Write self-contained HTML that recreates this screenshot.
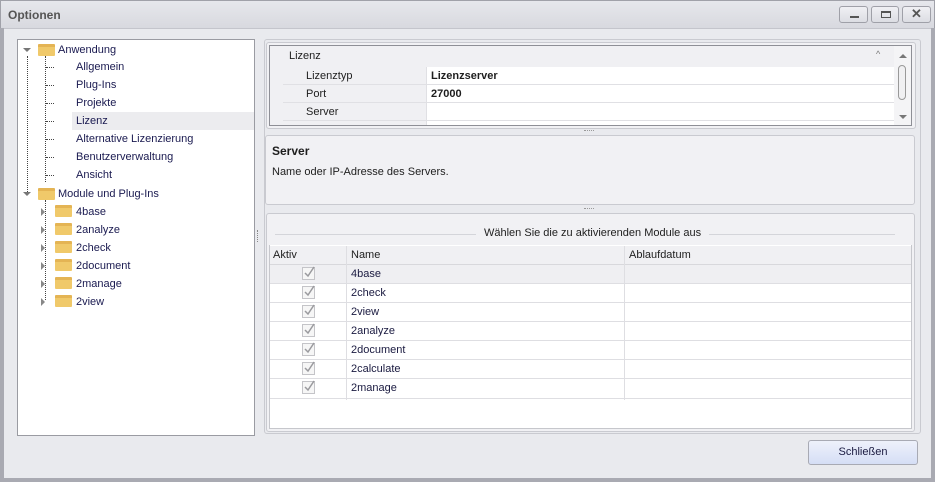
<!DOCTYPE html>
<html><head><meta charset="utf-8"><style>
*{box-sizing:border-box;margin:0;padding:0}
body{width:935px;height:482px;overflow:hidden;font-family:"Liberation Sans",sans-serif;font-size:11px;color:#1e1e1e;background:#a9aab2;position:relative}
.a{position:absolute}
#title{left:0;top:0;width:935px;height:28px;background:linear-gradient(#e6e7ec,#d8d9df);border:1px solid #a0a1a9;border-bottom:none}
#body{left:4px;top:28px;width:927px;height:450px;background:#e9eaee;border-top:1px solid #c4c5cc}
.wb{top:5px;height:17px;border:1px solid #9fa0a8;border-radius:3px;background:linear-gradient(#f0f0f4,#dcdde3)}
.tree{left:17px;top:39px;width:238px;height:397px;background:#fff;border:1px solid #9a9ba2}
.t{position:absolute;height:18px;line-height:18px;color:#1a1a50}
.fold{position:absolute;width:17px;height:12px;background:#f0c96a;border-radius:1px;border-top:3px solid #e4b454}
.dot{position:absolute;border-left:1px dotted #444}
.doth{position:absolute;border-top:1px dotted #444;width:8px}
.arr{position:absolute;width:0;height:0}
.grp{border:1px solid #c9cad0;border-radius:3px;background:#f1f1f4}
.cell{position:absolute;height:18px;line-height:18px;border-bottom:1px solid #e0e0e4}
</style></head><body>
<div id="title" class="a"><div class="a" style="left:7px;top:7px;font-weight:bold;font-size:12px;color:#555">Optionen</div>
<div class="a wb" style="left:838px;width:29px"><div class="a" style="left:10px;top:9px;width:9px;height:2px;background:#555"></div></div>
<div class="a wb" style="left:870px;width:28px"><div class="a" style="left:9px;top:4px;width:10px;height:7px;border:1px solid #555;border-top-width:2px"></div></div>
<div class="a wb" style="left:901px;width:29px;text-align:center;font-size:13px;line-height:14px;color:#555;font-weight:bold">✕</div>
</div>
<div id="body" class="a"></div>

<div class="a tree">
<div class="arr" style="left:5px;top:8px;border-left:4px solid transparent;border-right:4px solid transparent;border-top:4px solid #777"></div>
<div class="fold" style="left:20px;top:4px"></div>
<div class="t" style="left:40px;top:1px">Anwendung</div>
<div class="dot" style="left:9px;top:16px;height:136px"></div>
<div class="dot" style="left:27px;top:16px;height:126px"></div>
<div class="doth" style="left:28px;top:27px"></div><div class="t" style="left:58px;top:18px">Allgemein</div>
<div class="doth" style="left:28px;top:45px"></div><div class="t" style="left:58px;top:36px">Plug-Ins</div>
<div class="doth" style="left:28px;top:63px"></div><div class="t" style="left:58px;top:54px">Projekte</div>
<div class="a" style="left:54px;top:72px;width:182px;height:18px;background:#ececef"></div>
<div class="doth" style="left:28px;top:81px"></div><div class="t" style="left:58px;top:72px">Lizenz</div>
<div class="doth" style="left:28px;top:99px"></div><div class="t" style="left:58px;top:90px">Alternative Lizenzierung</div>
<div class="doth" style="left:28px;top:117px"></div><div class="t" style="left:58px;top:108px">Benutzerverwaltung</div>
<div class="doth" style="left:28px;top:135px"></div><div class="t" style="left:58px;top:126px">Ansicht</div>
<div class="arr" style="left:5px;top:152px;border-left:4px solid transparent;border-right:4px solid transparent;border-top:4px solid #777"></div>
<div class="fold" style="left:20px;top:148px"></div>
<div class="t" style="left:40px;top:145px">Module und Plug-Ins</div>
<div class="dot" style="left:27px;top:160px;height:100px"></div>
<div class="t" style="left:58px;top:163px">4base</div>
<div class="t" style="left:58px;top:181px">2analyze</div>
<div class="t" style="left:58px;top:199px">2check</div>
<div class="t" style="left:58px;top:217px">2document</div>
<div class="t" style="left:58px;top:235px">2manage</div>
<div class="t" style="left:58px;top:253px">2view</div>
</div>

<div class="arr" style="left:41px;top:208px;border-top:4px solid transparent;border-bottom:4px solid transparent;border-left:4px solid #888"></div><div class="fold" style="left:55px;top:205px"></div>
<div class="arr" style="left:41px;top:226px;border-top:4px solid transparent;border-bottom:4px solid transparent;border-left:4px solid #888"></div><div class="fold" style="left:55px;top:223px"></div>
<div class="arr" style="left:41px;top:244px;border-top:4px solid transparent;border-bottom:4px solid transparent;border-left:4px solid #888"></div><div class="fold" style="left:55px;top:241px"></div>
<div class="arr" style="left:41px;top:262px;border-top:4px solid transparent;border-bottom:4px solid transparent;border-left:4px solid #888"></div><div class="fold" style="left:55px;top:259px"></div>
<div class="arr" style="left:41px;top:280px;border-top:4px solid transparent;border-bottom:4px solid transparent;border-left:4px solid #888"></div><div class="fold" style="left:55px;top:277px"></div>
<div class="arr" style="left:41px;top:298px;border-top:4px solid transparent;border-bottom:4px solid transparent;border-left:4px solid #888"></div><div class="fold" style="left:55px;top:295px"></div>

<div class="a" style="left:257px;top:230px;width:2px;height:12px;border-left:1px dotted #888"></div>

<div class="a grp" style="left:264px;top:39px;width:657px;height:395px;background:#e9eaee"></div>
<div class="a grp" style="left:266px;top:42px;width:650px;height:87px"></div>
<div class="a" style="left:269px;top:45px;width:643px;height:81px;background:#f0f0f3;border:1px solid #8e8f96;overflow:hidden">
<div class="a" style="left:19px;top:4px">Lizenz</div>
<div class="a" style="left:606px;top:3px;color:#777;font-size:9px">^</div>
<div class="a" style="left:13px;top:21px;width:611px;height:60px;background:#fff"></div>
<div class="cell" style="left:13px;top:21px;width:143px;background:#f0f0f3;padding-left:23px">Lizenztyp</div>
<div class="cell" style="left:156px;top:21px;width:468px;border-left:1px solid #e0e0e4;padding-left:4px;font-weight:bold">Lizenzserver</div>
<div class="cell" style="left:13px;top:39px;width:143px;background:#f0f0f3;padding-left:23px">Port</div>
<div class="cell" style="left:156px;top:39px;width:468px;border-left:1px solid #e0e0e4;padding-left:4px;font-weight:bold">27000</div>
<div class="cell" style="left:13px;top:57px;width:143px;background:#f0f0f3;padding-left:23px">Server</div>
<div class="cell" style="left:156px;top:57px;width:468px;border-left:1px solid #e0e0e4"></div>
<div class="cell" style="left:13px;top:75px;width:143px;background:#f0f0f3"></div>
<div class="cell" style="left:156px;top:75px;width:468px;border-left:1px solid #e0e0e4"></div>
<div class="a" style="left:624px;top:0;width:18px;height:80px;background:#f4f4f6"></div>
<div class="a" style="left:629px;top:8px;border-left:4px solid transparent;border-right:4px solid transparent;border-bottom:4px solid #777"></div>
<div class="a" style="left:628px;top:19px;width:8px;height:35px;border:1px solid #999;border-radius:4px;background:#f0f0f2"></div>
<div class="a" style="left:629px;top:69px;border-left:4px solid transparent;border-right:4px solid transparent;border-top:4px solid #777"></div>
</div>
<div class="a" style="left:584px;top:130px;width:10px;border-top:1px dotted #999"></div>
<div class="a grp" style="left:265px;top:135px;width:650px;height:70px"></div>
<div class="a" style="left:272px;top:144px;font-weight:bold;font-size:12px">Server</div>
<div class="a" style="left:272px;top:166px">Name oder IP-Adresse des Servers.</div>
<div class="a" style="left:584px;top:208px;width:10px;border-top:1px dotted #999"></div>
<div class="a grp" style="left:266px;top:213px;width:649px;height:219px"></div>
<div class="a" style="left:275px;top:234px;width:620px;border-top:1px solid #d4d5da"></div>
<div class="a" style="left:476px;top:227px;padding:0 8px;background:#f1f1f4">Wählen Sie die zu aktivierenden Module aus</div>
<div class="a" style="left:269px;top:245px;width:643px;height:184px;background:#fff;border:1px solid #c6c7cc;border-top:none"></div>
<div class="a" style="left:270px;top:246px;width:641px;height:19px;background:#f0f0f3;border-bottom:1px solid #d8d8dc"></div>
<div class="a" style="left:273px;top:249px">Aktiv</div>
<div class="a" style="left:351px;top:249px">Name</div>
<div class="a" style="left:629px;top:249px">Ablaufdatum</div>
<div class="a" style="left:346px;top:246px;height:154px;border-left:1px solid #dedee2"></div>
<div class="a" style="left:624px;top:246px;height:154px;border-left:1px solid #dedee2"></div>
<div class="a" style="left:270px;top:265px;width:641px;height:19px;background:#efeff2;border-bottom:1px solid #dedee2"></div>
<div class="a" style="left:270px;top:284px;width:641px;height:19px;border-bottom:1px solid #dedee2"></div>
<div class="a" style="left:270px;top:303px;width:641px;height:19px;border-bottom:1px solid #dedee2"></div>
<div class="a" style="left:270px;top:322px;width:641px;height:19px;border-bottom:1px solid #dedee2"></div>
<div class="a" style="left:270px;top:341px;width:641px;height:19px;border-bottom:1px solid #dedee2"></div>
<div class="a" style="left:270px;top:360px;width:641px;height:19px;border-bottom:1px solid #dedee2"></div>
<div class="a" style="left:270px;top:379px;width:641px;height:20px;border-bottom:1px solid #dedee2"></div>
<div class="a" style="left:346px;top:265px;height:134px;border-left:1px solid #dedee2"></div>
<div class="a" style="left:624px;top:265px;height:134px;border-left:1px solid #dedee2"></div>
<div class="a" style="left:351px;top:268px;color:#1a1a40">4base</div>
<div class="a" style="left:351px;top:287px;color:#1a1a40">2check</div>
<div class="a" style="left:351px;top:306px;color:#1a1a40">2view</div>
<div class="a" style="left:351px;top:325px;color:#1a1a40">2analyze</div>
<div class="a" style="left:351px;top:344px;color:#1a1a40">2document</div>
<div class="a" style="left:351px;top:363px;color:#1a1a40">2calculate</div>
<div class="a" style="left:351px;top:382px;color:#1a1a40">2manage</div>
<svg class="a" style="left:302px;top:266px" width="14" height="130" viewBox="0 0 14 130">
<g fill="#f6f6f6" stroke="#c4c4c8"><rect x="0.5" y="1.5" width="12" height="12"/><rect x="0.5" y="20.5" width="12" height="12"/><rect x="0.5" y="39.5" width="12" height="12"/><rect x="0.5" y="58.5" width="12" height="12"/><rect x="0.5" y="77.5" width="12" height="12"/><rect x="0.5" y="96.5" width="12" height="12"/><rect x="0.5" y="115.5" width="12" height="12"/></g>
<g fill="none" stroke="#9a9a9e" stroke-width="1.5"><path d="M3 7l3 3 6-9"/><path d="M3 26l3 3 6-9"/><path d="M3 45l3 3 6-9"/><path d="M3 64l3 3 6-9"/><path d="M3 83l3 3 6-9"/><path d="M3 102l3 3 6-9"/><path d="M3 121l3 3 6-9"/></g>
</svg>
<div class="a" style="left:808px;top:440px;width:110px;height:25px;border:1px solid #a8aab4;border-radius:3px;background:linear-gradient(#eef1fb,#d5def5);text-align:center;line-height:23px;color:#1a1a40">Schließen</div>
</body></html>
